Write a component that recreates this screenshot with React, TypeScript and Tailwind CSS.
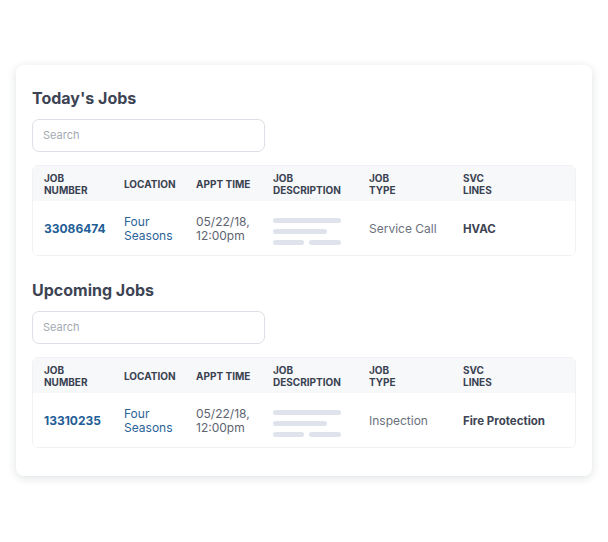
import React from "react";

type Job = { num: string; type: string; svc: string };

function Bars() {
  return (
    <div className="flex flex-col gap-[6px] w-[68px] mt-[4px]">
      <div className="h-[5px] w-[68px] rounded-full bg-[#dfe3ec]" />
      <div className="h-[5px] w-[54px] rounded-full bg-[#dfe3ec]" />
      <div className="flex gap-[5px]">
        <div className="h-[5px] w-[31px] rounded-full bg-[#dfe3ec]" />
        <div className="h-[5px] w-[32px] rounded-full bg-[#dfe3ec]" />
      </div>
    </div>
  );
}

function Section({ title, job, first }: { title: string; job: Job; first?: boolean }) {
  const grid = "grid grid-cols-[80px_72px_77px_96px_94px_1fr] px-[11px] items-center";
  return (
    <div className={first ? "" : "mt-[22px]"}>
      <h2 className="text-[16px] leading-6 font-bold text-[#3d4453] mb-[9px]">{title}</h2>
      <div className="w-[233px] h-[33px] rounded-[7px] border-[1.5px] border-[#dddfe6] flex items-center px-[10px] text-[11px] text-[#a4a9b3]">
        Search
      </div>
      <div className="mt-[13px] rounded-[6px] border border-[#f1f2f5] overflow-hidden">
        <div className={`${grid} h-[35px] bg-[#f7f8fa] text-[10px] leading-[12px] font-bold text-[#3a4150] uppercase`}>
          <div>Job<br />Number</div>
          <div>Location</div>
          <div>Appt Time</div>
          <div>Job<br />Description</div>
          <div>Job<br />Type</div>
          <div>Svc<br />Lines</div>
        </div>
        <div className={`${grid} h-[54px] bg-white text-[12px] leading-[14px] pt-[2px]`}>
          <div className="font-bold text-[#225d96]">{job.num}</div>
          <div className="text-[#2a6398]">Four<br />Seasons</div>
          <div className="text-[#5d636f]">05/22/18,<br />12:00pm</div>
          <div><Bars /></div>
          <div className="text-[#6b717c]">{job.type}</div>
          <div className="font-bold text-[11.5px] text-[#3d4453]">{job.svc}</div>
        </div>
      </div>
    </div>
  );
}

export default function App() {
  return (
    <div
      className="w-[608px] h-[542px] bg-white pt-[65px] px-4"
      style={{ fontFamily: "Inter, 'Noto Sans', sans-serif" }}
    >
      <div className="w-[576px] h-[411px] rounded-[8px] bg-white shadow-[0_2px_10px_rgba(30,40,60,0.14)] px-4 pt-[21px]">
        <Section title="Today's Jobs" job={{ num: "33086474", type: "Service Call", svc: "HVAC" }} first />
        <Section title="Upcoming Jobs" job={{ num: "13310235", type: "Inspection", svc: "Fire Protection" }} />
      </div>
    </div>
  );
}
